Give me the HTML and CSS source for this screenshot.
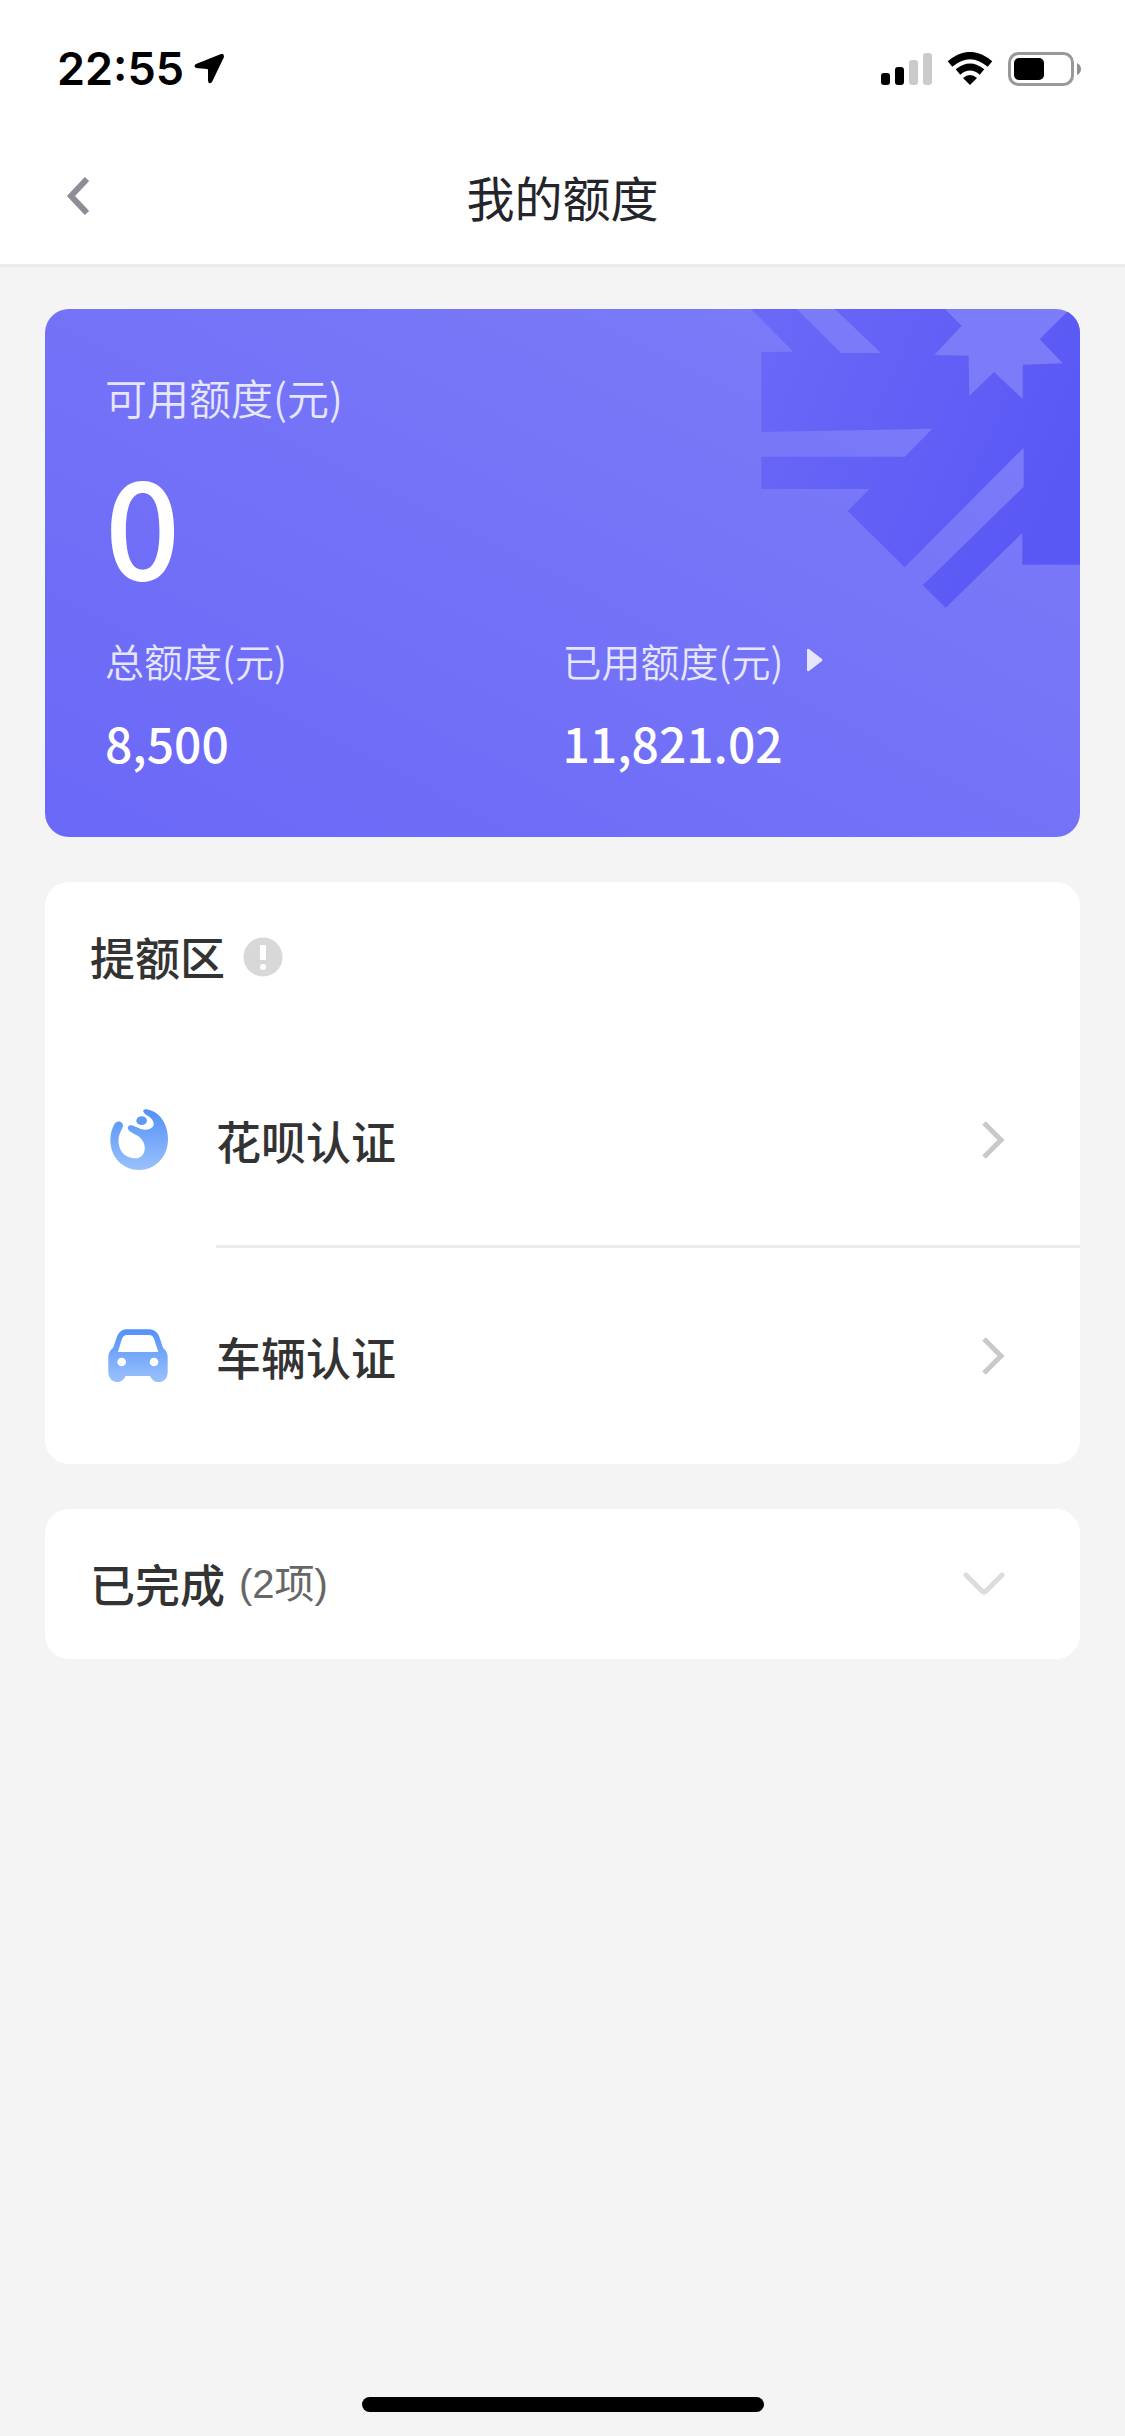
FILE: index.html
```html
<!DOCTYPE html>
<html lang="zh-CN">
<head>
    <meta charset="UTF-8">
    <meta name="viewport" content="width=device-width, initial-scale=1.0">
    <title>我的额度</title>
    <link rel="stylesheet" href="styles.css">
</head>
<body>
    <header class="header">
        <div class="status-bar">
            <div class="status-left">
                <span class="time">22:55</span>
                <svg width="30" height="30" viewBox="0 0 30 30"><path d="M27 0 L2 10 Q-1 12 2 14 L13 15 Q14 15 14 16 L14 27 Q15 31 18 28 L30 3 Q30 -1 27 0Z"/></svg>
            </div>
            <div class="status-right">
                <svg width="51" height="34" viewBox="0 0 51 34">
                    <rect x="0" y="21" width="9" height="12" rx="3"/>
                    <rect x="14" y="15" width="9" height="18" rx="3"/>
                    <rect x="28" y="8" width="9" height="25" rx="3" fill="#cbcbcb"/>
                    <rect x="42" y="1" width="9" height="32" rx="3" fill="#cbcbcb"/>
                </svg>
                <svg width="46" height="34" viewBox="0 0 46 34">
                    <path d="M3 12 Q23 -5 43 12" fill="none" stroke="#000" stroke-width="7"/>
                    <path d="M11 20 Q23 10 35 20" fill="none" stroke="#000" stroke-width="7"/>
                    <path d="M16 26 Q23 20 30 26 L23 33Z"/>
                </svg>
                <svg width="74" height="34" viewBox="0 0 74 34">
                    <rect x="1.500" y="1.500" width="63" height="31" rx="9" fill="none" stroke="#999" stroke-width="3"/>
                    <rect x="6" y="6" width="30" height="22" rx="5"/>
                    <path d="M69 11 Q73 13 73 17 Q73 21 69 23Z" fill="#8f8f8f"/>
                </svg>
            </div>
        </div>
        <div class="nav-bar">
            <button class="back" aria-label="返回">
                <svg width="24" height="38" viewBox="0 0 24 38"><path d="M21 2 L5 19 L21 36" fill="none" stroke="#8e8d95" stroke-width="6"/></svg>
            </button>
            <h1>我的额度</h1>
        </div>
    </header>

    <main class="content">
        <section class="quota">
            <svg class="quota-pattern" width="330" height="300" viewBox="150 57 990 900">
                <defs>
                    <linearGradient id="pattern-fill" x1="0" y1="0" x2="1" y2="0.4">
                        <stop offset="0" stop-color="#6a69f7"/>
                        <stop offset="1" stop-color="#5a58f5"/>
                    </linearGradient>
                </defs>
                <path fill="url(#pattern-fill)" fill-rule="evenodd" d="M153 57 L280 185 L184 186 V426 L697 416 L614 500 H184 V597 H508 L443 663 L614 832 L971 473 V590 L668 886 L737 953 L967 729 V824 H1140 V57Z
                    M290 57 L423 189 H543 L404 57Z
                    M735 57 L785 107 L703 195 L806 197 L808 318 L882 246 L968 327 V224 L1088 220 L1019 148 L1110 57Z"/>
            </svg>
            <p class="quota-label main-label">可用额度(元)</p>
            <p class="available">0</p>
            <div class="quota-row">
                <div class="quota-item">
                    <p class="quota-label">总额度(元)</p>
                    <p class="amount">8,500</p>
                </div>
                <a class="quota-item" href="#used">
                    <p class="quota-label">已用额度(元)
                        <svg width="16" height="24" viewBox="0 0 16 24"><path d="M0 2 Q0 0 2 1 L15 11 Q16 12 15 13 L2 23 Q0 24 0 22Z" fill="#e6e6fd"/></svg>
                    </p>
                    <p class="amount">11,821.02</p>
                </a>
            </div>
        </section>

        <section class="card">
            <div class="card-header">
                <h2>提额区</h2>
                <button class="info" aria-label="说明">
                    <svg width="40" height="40" viewBox="0 0 40 40">
                        <circle cx="20" cy="20" r="19.500" fill="#d8d8d8"/>
                        <rect x="17" y="8" width="6" height="15" rx="1" fill="#fff"/>
                        <circle cx="20" cy="30" r="3" fill="#fff"/>
                    </svg>
                </button>
            </div>
            <a class="row" href="#huabei">
                <svg width="60" height="62" viewBox="205 687 180 186">
                    <defs>
                        <linearGradient id="icon-fill" x1="0" y1="0" x2="0" y2="1">
                            <stop offset="0" stop-color="#5390f8"/>
                            <stop offset="1" stop-color="#9ac1fb"/>
                        </linearGradient>
                    </defs>
                    <path fill="url(#icon-fill)" d="M320 688 C360 694 385 732 385 777 C385 832 346 870 298 870 C250 870 212 832 212 780 C212 762 216 748 223 734 C228 726 236 723 243 726 C251 730 252 738 247 746 C238 762 234 778 238 796 C243 820 262 835 286 835 C306 835 317 820 315 799 C313 781 299 769 284 762 C275 757 266 753 264 744 C264 737 270 734 277 736 C292 741 302 749 317 749 C332 749 342 742 342 732 C342 719 331 711 319 704 C308 698 308 686 320 688Z"/>
                    <ellipse cx="306" cy="722" rx="16" ry="13" fill="#6298f8"/>
                </svg>
                <div class="row-body">
                    <span>花呗认证</span>
                    <svg class="arrow" width="24" height="38" viewBox="0 0 24 38"><path d="M3 2 L20 19 L3 36" fill="none" stroke="#c9c9c9" stroke-width="5"/></svg>
                </div>
            </a>
            <a class="row" href="#car">
                <svg width="60" height="54" viewBox="204 387 180 162">
                    <path fill="url(#icon-fill)" fill-rule="evenodd" d="M262 388 H324 C342 388 352 396 358 410 L369 443 C378 450 383 460 383 470 V515 C383 535 372 546 355 546 C343 546 337 540 330 528 H257 C250 540 244 546 233 546 C216 546 205 533 205 515 V470 C205 460 210 450 219 443 L231 410 C237 396 246 388 262 388Z
                        M262 405 C252 405 248 410 245 419 L234 456 H355 L342 416 C339 408 334 405 326 405Z"/>
                    <circle cx="245" cy="486" r="13" fill="#fff"/>
                    <circle cx="342" cy="486" r="13" fill="#fff"/>
                </svg>
                <div class="row-body">
                    <span>车辆认证</span>
                    <svg class="arrow" width="24" height="38" viewBox="0 0 24 38"><path d="M3 2 L20 19 L3 36" fill="none" stroke="#c9c9c9" stroke-width="5"/></svg>
                </div>
            </a>
        </section>

        <section class="card">
            <button class="card-header done">
                <span class="done-title">已完成</span>
                <span class="done-count">(2项)</span>
                <svg class="arrow" width="42" height="24" viewBox="0 0 42 24"><path d="M3 3 L19 19 Q21 21 23 19 L39 3" fill="none" stroke="#dcdcdc" stroke-width="5" stroke-linecap="round"/></svg>
            </button>
        </section>
    </main>

    <footer class="home-bar"><span class="home-indicator"></span></footer>
</body>
</html>
```

FILE: styles.css
```css
* {
    box-sizing: border-box;
}

body {
    display: flex;
    flex-direction: column;
    min-height: 100vh;
    margin: 0;
    background-color: #f4f4f4;
    color: #333;
    font-family: "Noto Sans CJK SC", sans-serif;
}

h1, h2, p {
    margin: 0;
}

a {
    color: inherit;
    text-decoration: none;
}

button {
    padding: 0;
    border: none;
    background: none;
    color: inherit;
    font-family: inherit;
    cursor: pointer;
}

svg {
    display: block;
    flex-shrink: 0;
}

.header {
    background-color: #fff;
    border-bottom: 3px solid #ebebeb;
}

/* status bar */
.status-bar {
    display: flex;
    justify-content: space-between;
    align-items: center;
    height: 132px;
    padding: 6px 43px 0 57px;
}

.status-left {
    display: flex;
    align-items: center;
    gap: 10px;
}

.status-right {
    display: flex;
    align-items: center;
    gap: 15px;
}

.time {
    font-family: Inter, sans-serif;
    font-size: 45px;
    font-weight: 600;
    line-height: 60px;
    color: #000;
}

/* nav */
.nav-bar {
    display: grid;
    grid-template-columns: 90px 1fr 90px;
    align-items: center;
    height: 132px;
    padding-bottom: 4px;
}

.back {
    justify-self: end;
}

.nav-bar h1 {
    font-size: 48px;
    font-weight: 400;
    line-height: 72px;
    text-align: center;
    color: #23252b;
}

.content {
    display: flex;
    flex-direction: column;
    gap: 45px;
    padding: 42px 45px 45px;
}

/* quota card */
.quota {
    position: relative;
    overflow: hidden;
    padding: 58px 60px 65px;
    border-radius: 24px;
    background: linear-gradient(27deg, #6a68f7, #7e7df8);
    color: #fff;
}

.quota-pattern {
    position: absolute;
    top: 0;
    right: 0;
}

.quota-label {
    display: flex;
    align-items: center;
    gap: 24px;
    font-size: 39px;
    font-weight: 350;
    line-height: 60px;
    color: #e6e6fd;
}

.main-label {
    font-size: 42px;
}

.available {
    margin: 34px 0 45px;
    font-size: 132px;
    font-weight: 500;
    line-height: 124px;
}

.quota-row {
    display: grid;
    grid-template-columns: 1fr 1fr;
}

.amount {
    margin-top: 22px;
    font-size: 48px;
    font-weight: 500;
    line-height: 60px;
}

/* white cards */
.card {
    overflow: hidden;
    border-radius: 24px;
    background-color: #fff;
}

.card-header {
    display: flex;
    align-items: center;
    width: 100%;
    height: 150px;
    padding: 0 75px 0 45px;
}

.card-header h2, .done-title {
    font-size: 45px;
    font-weight: 500;
    line-height: 66px;
}

.info {
    margin-left: 18px;
}

.row {
    display: flex;
    align-items: center;
    gap: 48px;
    height: 216px;
    padding-left: 63px;
    font-size: 45px;
    font-weight: 500;
}

.row-body {
    display: flex;
    flex: 1;
    align-items: center;
    height: 100%;
    padding-right: 75px;
    border-top: 3px solid transparent;
    border-bottom: 3px solid #ebebeb;
}

.row:last-child .row-body {
    border-bottom-color: transparent;
}

.arrow {
    margin-left: auto;
}

.done-count {
    margin-left: 14px;
    font-family: "Liberation Sans", "Noto Sans CJK SC", sans-serif;
    font-size: 40px;
    line-height: 66px;
    color: #666;
}

/* home indicator */
.home-bar {
    display: flex;
    justify-content: center;
    margin-top: auto;
    padding-bottom: 24px;
}

.home-indicator {
    width: 402px;
    height: 15px;
    border-radius: 8px;
    background-color: #000;
}
```
